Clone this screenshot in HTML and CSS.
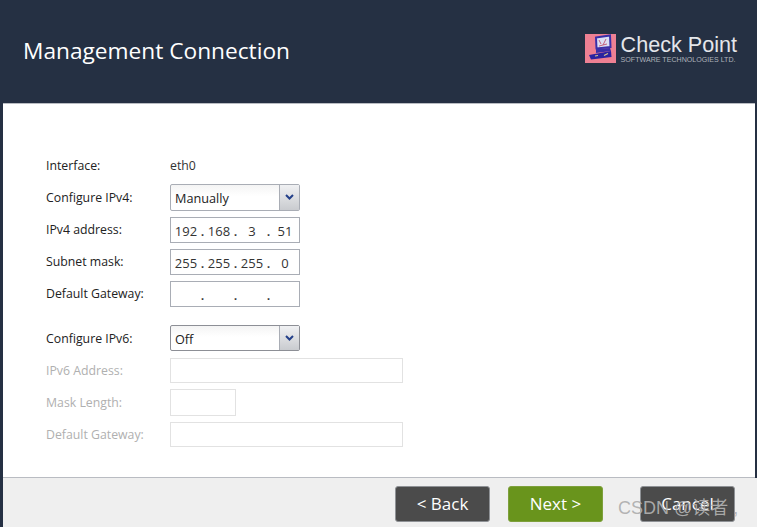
FILE: index.html
```html
<!DOCTYPE html>
<html lang="en">
<head>
<meta charset="utf-8">
<title>Management Connection</title>
<link rel="stylesheet" href="styles.css">
</head>
<body>
<div class="window">
  <header class="header">
    <h1 class="title">Management Connection</h1>
    <div class="logo">
      <svg class="logo-icon" width="31" height="29" viewBox="0 0 31 29">
        <rect width="31" height="29" fill="#ee8093"/>
        <path d="M11 3.5 L25 1.5 L25.5 13 L11.5 14.5 Z" fill="#dcdff4" stroke="#3a2fa8" stroke-width="2"/>
        <path d="M14 6 L16 10 M21 5 L18 11 M14 12 L22 10" stroke="#c2607c" stroke-width="1" fill="none"/>
        <path d="M11 15 L25 14 L26 17 L11 19 Z" fill="#3a2fa8"/>
        <path d="M4 21 L26 17 L26.5 23 L6 25.5 Z" fill="#2a23a0"/>
        <path d="M10 22 L13 21.5 M19 21.5 L23 19.5" stroke="#d8c98a" stroke-width="1.2" fill="none"/>
      </svg>
      <div class="logo-text">
        <span class="logo-name">Check Point</span>
        <span class="logo-sub">SOFTWARE TECHNOLOGIES LTD.</span>
      </div>
    </div>
  </header>
  <main class="content">
    <form class="form">
      <div class="row row-info"><span class="label">Interface:</span><span class="value">eth0</span></div>
      <div class="group">
        <div class="row"><span class="label">Configure IPv4:</span>
          <div class="select"><span class="select-text">Manually</span><span class="select-btn"><svg width="9" height="6" viewBox="0 0 9 6"><path d="M1 1 L4.5 4.5 L8 1" fill="none" stroke="#24408a" stroke-width="2"/></svg></span></div>
        </div>
        <div class="row row-text"><span class="label">IPv4 address:</span>
          <div class="ip"><span>192</span><i>.</i><span>168</span><i>.</i><span>3</span><i>.</i><span>51</span></div>
        </div>
        <div class="row row-text"><span class="label">Subnet mask:</span>
          <div class="ip"><span>255</span><i>.</i><span>255</span><i>.</i><span>255</span><i>.</i><span>0</span></div>
        </div>
        <div class="row row-text"><span class="label">Default Gateway:</span>
          <div class="ip"><span></span><i>.</i><span></span><i>.</i><span></span><i>.</i><span></span></div>
        </div>
      </div>
      <div class="group group-v6">
        <div class="row row-v6"><span class="label">Configure IPv6:</span>
          <div class="select select-v6"><span class="select-text">Off</span><span class="select-btn"><svg width="9" height="6" viewBox="0 0 9 6"><path d="M1 1 L4.5 4.5 L8 1" fill="none" stroke="#24408a" stroke-width="2"/></svg></span></div>
        </div>
        <div class="row row-off"><span class="label">IPv6 Address:</span><div class="field wide"></div></div>
        <div class="row row-off"><span class="label">Mask Length:</span><div class="field short"></div></div>
        <div class="row row-off"><span class="label">Default Gateway:</span><div class="field wide"></div></div>
      </div>
    </form>
  </main>
  <footer class="footer">
    <button class="btn" type="button">&lt; Back</button>
    <button class="btn btn-next" type="button">Next &gt;</button>
    <button class="btn btn-cancel" type="button">Cancel</button>
  </footer>
  <div class="watermark">CSDN @读者 ,</div>
</div>
</body>
</html>
```
FILE: styles.css
```css
* { box-sizing: border-box; }
html, body { margin: 0; padding: 0; }
body {
  width: 757px;
  height: 527px;
  overflow: hidden;
  font-family: "Open Sans", "Noto Sans", sans-serif;
  color: #222;
}
.window {
  position: relative;
  width: 757px;
  height: 527px;
  display: flex;
  flex-direction: column;
  background: #253043;
}
.header {
  height: 103px;
  flex: none;
  display: flex;
  align-items: flex-start;
  justify-content: space-between;
  padding: 34px 20px 0 23px;
}
.title {
  margin: 1px 0 0;
  font-size: 22.7px;
  line-height: 32px;
  font-weight: 400;
  color: #fff;
}
.logo {
  display: flex;
  gap: 5px;
  color: #e4e6ea;
}
.logo-text { display: flex; flex-direction: column; }
.logo-name {
  font-family: "Liberation Sans", sans-serif;
  font-size: 21.6px;
  line-height: 22px;
}
.logo-sub {
  font-family: "Liberation Sans", sans-serif;
  font-size: 7.1px;
  line-height: 9px;
  color: #aeb2ba;
  white-space: nowrap;
}
.content {
  flex: none;
  height: 375px;
  margin: 0 2px 0 3px;
  padding: 48px 0 0 43px;
  background: #fff;
  border-top: 1px solid #b9bcc2;
  border-bottom: 1px solid #b9bcc2;
}
.form { display: flex; flex-direction: column; }
.group { display: flex; flex-direction: column; gap: 6px; }
.group-v6 { margin-top: 18px; }
.row {
  display: flex;
  align-items: center;
  min-height: 25px;
  font-size: 12.3px;
}
.row-info { height: 26px; margin-bottom: 6px; }
.row-text .label { padding-bottom: 1px; }
.row-v6 { margin-bottom: 1px; }
.label { width: 124px; flex: none; }
.value { color: #333; }
.select {
  width: 130px;
  height: 27px;
  display: flex;
  background: linear-gradient(#f4f4f4, #fff 45%);
  border: 1px solid #a9adb5;
  border-radius: 2px;
  font-size: 12.7px;
}
.select-v6 { border-color: #8d8f96; height: 26px; }
.select-text { flex: 1; padding-left: 4px; line-height: 26px; }
.select-btn {
  width: 20px;
  display: flex;
  justify-content: center;
  padding-top: 9px;
  background: linear-gradient(#f0f1f3, #c9cbcf);
  border-left: 1px solid #a9adb5;
}
.ip {
  width: 130px;
  height: 26px;
  display: grid;
  grid-template-columns: 26px 7px 26px 7px 26px 7px 26px;
  justify-content: start;
  padding-left: 2px;
  border: 1px solid #a9adb5;
  background: #fff;
  font-size: 13px;
  line-height: 26px;
  color: #333;
}
.ip span { text-align: center; }
.ip i { font-style: normal; text-align: center; font-weight: 600; }
.row-off .label { color: #b0b0b0; }
.field { height: 25px; border: 1px solid #e2e2e2; background: #fff; }
.wide { width: 233px; }
.short { width: 66px; height: 27px; }
.footer {
  flex: 1;
  display: flex;
  justify-content: flex-end;
  gap: 18px;
  padding: 8px 22px 0 0;
  background: #efefef;
  margin: 0 0 0 3px;
  align-items: flex-start;
}
.btn {
  width: 95px;
  height: 36px;
  border: 1px solid #8f9296;
  border-radius: 3px;
  background: #4b4b4b;
  color: #fff;
  font-family: inherit;
  font-size: 17px;
  line-height: 32px;
  padding: 0;
}
.btn-next { background: #69941c; border-color: #7ea03c; }
.btn-cancel { margin-left: 19px; }
.watermark {
  position: absolute;
  left: 618px;
  top: 496px;
  font-family: "Liberation Sans", "Noto Sans CJK SC", sans-serif;
  font-size: 18px;
  line-height: 24px;
  color: rgba(175, 175, 175, 0.95);
  white-space: nowrap;
}
```
